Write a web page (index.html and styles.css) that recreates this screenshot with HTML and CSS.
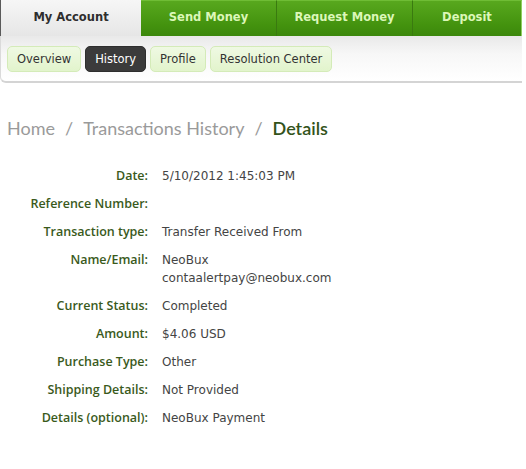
FILE: index.html
```html
<!DOCTYPE html>
<html>
<head>
<meta charset="utf-8">
<link rel="stylesheet" href="styles.css">
</head>
<body>
<div class="page">
  <nav class="tabs">
    <a class="tab tab-active">My Account</a>
    <a class="tab tab-green">Send Money</a>
    <a class="tab tab-green">Request Money</a>
    <a class="tab tab-green tab-last">Deposit</a>
  </nav>
  <div class="subnav">
    <a class="pill">Overview</a>
    <a class="pill pill-active">History</a>
    <a class="pill">Profile</a>
    <a class="pill">Resolution Center</a>
  </div>
  <div class="crumbs">
    <span class="crumb">Home</span><span class="sep">/</span><span class="crumb">Transactions History</span><span class="sep">/</span><span class="crumb-current">Details</span>
  </div>
  <dl class="details">
    <dt>Date:</dt><dd>5/10/2012 1:45:03 PM</dd>
    <dt>Reference Number:</dt><dd></dd>
    <dt>Transaction type:</dt><dd>Transfer Received From</dd>
    <dt>Name/Email:</dt><dd>NeoBux<br>contaalertpay@neobux.com</dd>
    <dt>Current Status:</dt><dd>Completed</dd>
    <dt>Amount:</dt><dd>$4.06 USD</dd>
    <dt>Purchase Type:</dt><dd>Other</dd>
    <dt>Shipping Details:</dt><dd>Not Provided</dd>
    <dt>Details (optional):</dt><dd>NeoBux Payment</dd>
  </dl>
</div>
</body>
</html>
```

FILE: styles.css
```css
html, body {
  margin: 0;
  padding: 0;
  background: #ffffff;
}
.page {
  width: 526px;
  font-family: "DejaVu Sans", Verdana, sans-serif;
}
.tabs {
  display: flex;
  height: 36px;
  width: 522px;
}
.tab {
  display: flex;
  align-items: center;
  justify-content: center;
  font-weight: bold;
  font-size: 11.5px;
  text-decoration: none;
  box-sizing: border-box;
  padding-bottom: 3px;
}
.tab-active {
  width: 141px;
  color: #2e2e2e;
  background: linear-gradient(#f6f6f6, #e6e6e6);
  border-left: 1px solid #5a5a5a;
}
.tab-green {
  width: 136px;
  color: #dcf7b8;
  background: linear-gradient(#58a81e, #43920e 70%, #3c880c);
  border-right: 1px solid #3a7a10;
  border-top: 1px solid #6fbd35;
}
.tab-last {
  width: 109px;
  border-right: 1px solid #8fcf60;
}
.subnav {
  display: flex;
  gap: 4px;
  align-items: center;
  height: 47px;
  padding: 1px 0 0 6px;
  box-sizing: border-box;
  width: 522px;
  background: linear-gradient(#e9e9e9, #f7f7f7 40%, #ffffff);
  border-bottom: 2px solid #d4d4d4;
  border-left: 1px solid #dadada;
  border-bottom-left-radius: 6px;
}
.pill {
  font-size: 11.5px;
  color: #333333;
  padding: 5px 9px 5px;
  background: linear-gradient(#eff9e3, #e2f4cc);
  border: 1px solid #d4ebb8;
  border-radius: 5px;
}
.pill-active {
  background: #3b3b3b;
  border-color: #2e2e2e;
  color: #ffffff;
}
.crumbs {
  padding: 34px 0 0 7px;
  font-family: Lato, "Open Sans", sans-serif;
  font-size: 18px;
  color: #9a9a9a;
  height: 26px;
}
.sep {
  margin: 0 10px 0 10px;
}
.crumb-current {
  color: #33531a;
  font-weight: 600;
}
.details {
  display: grid;
  grid-template-columns: 148px auto;
  column-gap: 14px;
  row-gap: 10px;
  margin: 24px 0 0 0;
  line-height: 18px;
}
.details dt {
  text-align: right;
  color: #3a5a1c;
  font-family: "Open Sans", sans-serif;
  font-weight: 600;
  font-size: 12.5px;
}
.details dd {
  margin: 0;
  color: #444444;
  font-size: 12px;
}
```
